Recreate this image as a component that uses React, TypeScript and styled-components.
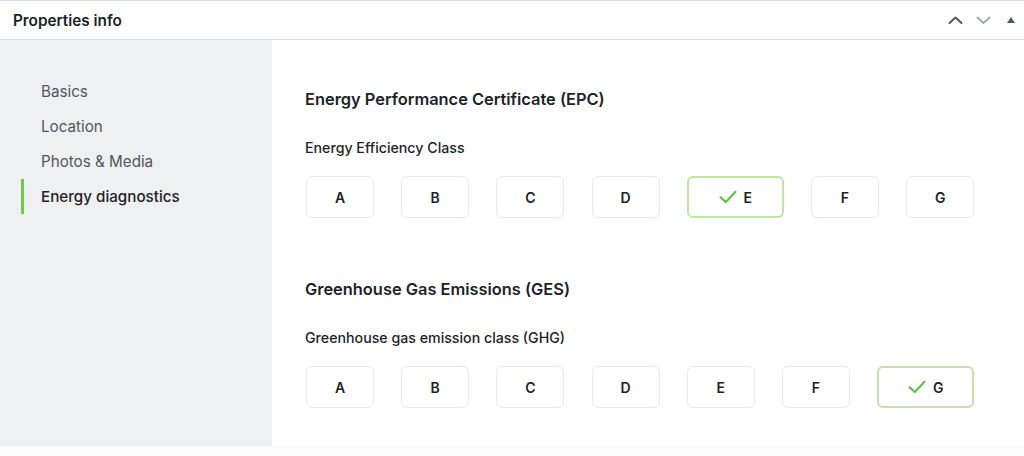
import React from "react";
import styled, { createGlobalStyle } from "styled-components";

const Global = createGlobalStyle`
  html, body { margin: 0; padding: 0; background: #fff; }
  body { font-family: Inter, "Noto Sans", sans-serif; color: #1d2327; -webkit-font-smoothing: antialiased; }
`;

const Panel = styled.div`
  width: 1024px;
  height: 456px;
  background: #fcfcfc;
  border-top: 1px solid #dcdcde;
  box-sizing: border-box;
  display: flex;
  flex-direction: column;
`;

const Header = styled.div`
  height: 39px;
  flex: none;
  background: #fff;
  border-bottom: 1px solid #dcdcde;
  display: flex;
  align-items: center;
  justify-content: space-between;
  padding: 0 2px 0 13px;
  box-sizing: border-box;
`;

const Title = styled.h2`
  margin: 0;
  font-size: 15.3px;
  font-weight: 600;
  color: #1d2327;
`;

const Controls = styled.div`
  display: flex;
  align-items: center;
  gap: 6px;
`;

const CtrlBtn = styled.button`
  width: 22px;
  height: 22px;
  padding: 0;
  border: none;
  background: none;
  display: flex;
  align-items: center;
  justify-content: center;
`;

const Body = styled.div`
  display: flex;
  height: 406px;
  flex: none;
`;

const Sidebar = styled.nav`
  width: 272px;
  flex: none;
  background: #eff0f2;
  padding-top: 34px;
  box-sizing: border-box;
  display: flex;
  flex-direction: column;
`;

const NavItem = styled.div<{ $active?: boolean }>`
  height: 35px;
  display: flex;
  align-items: center;
  margin-left: 21px;
  padding-left: 17px;
  border-left: 3px solid ${(p) => (p.$active ? "#68cf45" : "transparent")};
  font-size: 15.2px;
  font-weight: ${(p) => (p.$active ? 500 : 400)};
  color: ${(p) => (p.$active ? "#1d2327" : "#50575e")};
`;

const Content = styled.main`
  flex: 1;
  background: #fff;
  padding: 49px 0 0 33px;
  box-sizing: border-box;
`;

const Section = styled.section`
  & + & {
    margin-top: 61px;
  }
`;

const Heading = styled.h3`
  margin: 0;
  font-size: 16.4px;
  line-height: 20px;
  font-weight: 600;
  color: #1d2327;
`;

const Label = styled.div`
  margin-top: 29px;
  font-size: 14.2px;
  line-height: 20px;
  font-weight: 500;
  color: #1d2327;
`;

const Options = styled.div`
  margin-top: 18px;
  margin-left: 1px;
  display: flex;
  gap: 27.2px;
`;

const Option = styled.button<{ $selected?: boolean }>`
  width: ${(p) => (p.$selected ? "97px" : "68px")};
  height: 42px;
  box-sizing: border-box;
  border-radius: 6px;
  border: ${(p) => (p.$selected ? "2px solid #bfe5a8" : "1.5px solid #e8eaeb")};
  background: #fff;
  display: flex;
  align-items: center;
  justify-content: center;
  gap: 7px;
  padding: 0;
  font-family: Inter, "Noto Sans", sans-serif;
  font-size: 14px;
  font-weight: 600;
  color: #1d2327;
`;

const Check = () => (
  <svg width="18" height="14" viewBox="0 0 18 14" fill="none">
    <path d="M1.5 7.2 L6.8 12 L16.5 1.8" stroke="#5cbf3c" strokeWidth="2" strokeLinecap="round" strokeLinejoin="round" />
  </svg>
);

const Chevron = ({ up, color }: { up?: boolean; color: string }) => (
  <svg width="15" height="10" viewBox="0 0 15 10" fill="none">
    <path
      d={up ? "M1.5 8 L7.5 2.5 L13.5 8" : "M1.5 2.5 L7.5 8 L13.5 2.5"}
      stroke={color}
      strokeWidth="2"
      strokeLinecap="round"
      strokeLinejoin="round"
    />
  </svg>
);

const Triangle = () => (
  <svg width="10" height="8" viewBox="0 0 10 8">
    <path d="M5 1 L9 7 L1 7 Z" fill="#50575e" />
  </svg>
);

const letters = ["A", "B", "C", "D", "E", "F", "G"];

const OptionRow = ({ selected }: { selected: string }) => (
  <Options>
    {letters.map((l) => (
      <Option key={l} $selected={l === selected}>
        {l === selected && <Check />}
        {l}
      </Option>
    ))}
  </Options>
);

export default function App() {
  return (
    <>
      <Global />
      <Panel>
        <Header>
          <Title>Properties info</Title>
          <Controls>
            <CtrlBtn><Chevron up color="#50575e" /></CtrlBtn>
            <CtrlBtn><Chevron color="#a7aaad" /></CtrlBtn>
            <CtrlBtn><Triangle /></CtrlBtn>
          </Controls>
        </Header>
        <Body>
          <Sidebar>
            <NavItem>Basics</NavItem>
            <NavItem>Location</NavItem>
            <NavItem>Photos &amp; Media</NavItem>
            <NavItem $active>Energy diagnostics</NavItem>
          </Sidebar>
          <Content>
            <Section>
              <Heading>Energy Performance Certificate (EPC)</Heading>
              <Label>Energy Efficiency Class</Label>
              <OptionRow selected="E" />
            </Section>
            <Section>
              <Heading>Greenhouse Gas Emissions (GES)</Heading>
              <Label>Greenhouse gas emission class (GHG)</Label>
              <OptionRow selected="G" />
            </Section>
          </Content>
        </Body>
      </Panel>
    </>
  );
}
